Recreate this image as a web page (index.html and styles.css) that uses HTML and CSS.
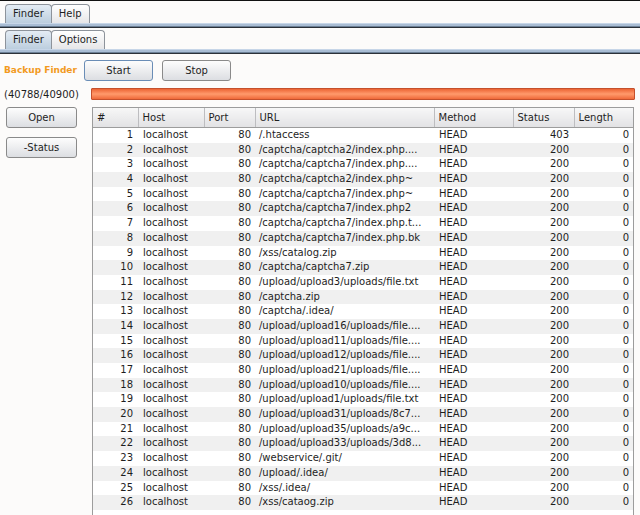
FILE: index.html
```html
<!DOCTYPE html>
<html lang="en">
<head>
    <meta charset="UTF-8">
    <title>Backup Finder</title>
    <link rel="stylesheet" href="styles.css">
</head>
<body>
    <div class="window">
        <div class="tabbar top">
            <div class="tab active">Finder</div>
            <div class="tab">Help</div>
        </div>
        <div class="tabline"></div>
        <div class="tabbar sub">
            <div class="tab active">Finder</div>
            <div class="tab">Options</div>
        </div>
        <div class="tabline"></div>

        <div class="toolbar">
            <span class="title">Backup Finder</span>
            <button class="btn focused">Start</button>
            <button class="btn">Stop</button>
        </div>
        <div class="progress-row">
            <span class="count">(40788/40900)</span>
            <div class="progress"></div>
        </div>

        <div class="main">
            <div class="side">
                <button class="btn side-btn">Open</button>
                <button class="btn side-btn">-Status</button>
            </div>
            <div class="tablebox">
                <table>
                    <colgroup>
                        <col class="c-num"><col class="c-host"><col class="c-port"><col class="c-url">
                        <col class="c-method"><col class="c-status"><col class="c-len">
                    </colgroup>
                    <thead>
                        <tr><th>#</th><th>Host</th><th>Port</th><th>URL</th><th>Method</th><th>Status</th><th>Length</th></tr>
                    </thead>
                    <tbody>
                        <tr><td class="r">1</td><td>localhost</td><td class="r">80</td><td>/.htaccess</td><td>HEAD</td><td class="r">403</td><td class="r">0</td></tr>
                        <tr><td class="r">2</td><td>localhost</td><td class="r">80</td><td>/captcha/captcha2/index.php....</td><td>HEAD</td><td class="r">200</td><td class="r">0</td></tr>
                        <tr><td class="r">3</td><td>localhost</td><td class="r">80</td><td>/captcha/captcha7/index.php....</td><td>HEAD</td><td class="r">200</td><td class="r">0</td></tr>
                        <tr><td class="r">4</td><td>localhost</td><td class="r">80</td><td>/captcha/captcha2/index.php~</td><td>HEAD</td><td class="r">200</td><td class="r">0</td></tr>
                        <tr><td class="r">5</td><td>localhost</td><td class="r">80</td><td>/captcha/captcha7/index.php~</td><td>HEAD</td><td class="r">200</td><td class="r">0</td></tr>
                        <tr><td class="r">6</td><td>localhost</td><td class="r">80</td><td>/captcha/captcha7/index.php2</td><td>HEAD</td><td class="r">200</td><td class="r">0</td></tr>
                        <tr><td class="r">7</td><td>localhost</td><td class="r">80</td><td>/captcha/captcha7/index.php.t...</td><td>HEAD</td><td class="r">200</td><td class="r">0</td></tr>
                        <tr><td class="r">8</td><td>localhost</td><td class="r">80</td><td>/captcha/captcha7/index.php.bk</td><td>HEAD</td><td class="r">200</td><td class="r">0</td></tr>
                        <tr><td class="r">9</td><td>localhost</td><td class="r">80</td><td>/xss/catalog.zip</td><td>HEAD</td><td class="r">200</td><td class="r">0</td></tr>
                        <tr><td class="r">10</td><td>localhost</td><td class="r">80</td><td>/captcha/captcha7.zip</td><td>HEAD</td><td class="r">200</td><td class="r">0</td></tr>
                        <tr><td class="r">11</td><td>localhost</td><td class="r">80</td><td>/upload/upload3/uploads/file.txt</td><td>HEAD</td><td class="r">200</td><td class="r">0</td></tr>
                        <tr><td class="r">12</td><td>localhost</td><td class="r">80</td><td>/captcha.zip</td><td>HEAD</td><td class="r">200</td><td class="r">0</td></tr>
                        <tr><td class="r">13</td><td>localhost</td><td class="r">80</td><td>/captcha/.idea/</td><td>HEAD</td><td class="r">200</td><td class="r">0</td></tr>
                        <tr><td class="r">14</td><td>localhost</td><td class="r">80</td><td>/upload/upload16/uploads/file....</td><td>HEAD</td><td class="r">200</td><td class="r">0</td></tr>
                        <tr><td class="r">15</td><td>localhost</td><td class="r">80</td><td>/upload/upload11/uploads/file....</td><td>HEAD</td><td class="r">200</td><td class="r">0</td></tr>
                        <tr><td class="r">16</td><td>localhost</td><td class="r">80</td><td>/upload/upload12/uploads/file....</td><td>HEAD</td><td class="r">200</td><td class="r">0</td></tr>
                        <tr><td class="r">17</td><td>localhost</td><td class="r">80</td><td>/upload/upload21/uploads/file....</td><td>HEAD</td><td class="r">200</td><td class="r">0</td></tr>
                        <tr><td class="r">18</td><td>localhost</td><td class="r">80</td><td>/upload/upload10/uploads/file....</td><td>HEAD</td><td class="r">200</td><td class="r">0</td></tr>
                        <tr><td class="r">19</td><td>localhost</td><td class="r">80</td><td>/upload/upload1/uploads/file.txt</td><td>HEAD</td><td class="r">200</td><td class="r">0</td></tr>
                        <tr><td class="r">20</td><td>localhost</td><td class="r">80</td><td>/upload/upload31/uploads/8c7...</td><td>HEAD</td><td class="r">200</td><td class="r">0</td></tr>
                        <tr><td class="r">21</td><td>localhost</td><td class="r">80</td><td>/upload/upload35/uploads/a9c...</td><td>HEAD</td><td class="r">200</td><td class="r">0</td></tr>
                        <tr><td class="r">22</td><td>localhost</td><td class="r">80</td><td>/upload/upload33/uploads/3d8...</td><td>HEAD</td><td class="r">200</td><td class="r">0</td></tr>
                        <tr><td class="r">23</td><td>localhost</td><td class="r">80</td><td>/webservice/.git/</td><td>HEAD</td><td class="r">200</td><td class="r">0</td></tr>
                        <tr><td class="r">24</td><td>localhost</td><td class="r">80</td><td>/upload/.idea/</td><td>HEAD</td><td class="r">200</td><td class="r">0</td></tr>
                        <tr><td class="r">25</td><td>localhost</td><td class="r">80</td><td>/xss/.idea/</td><td>HEAD</td><td class="r">200</td><td class="r">0</td></tr>
                        <tr><td class="r">26</td><td>localhost</td><td class="r">80</td><td>/xss/cataog.zip</td><td>HEAD</td><td class="r">200</td><td class="r">0</td></tr>
                    </tbody>
                </table>
            </div>
        </div>
    </div>
</body>
</html>
```

FILE: styles.css
```css
html, body {
    height: 100%;
}
body {
    margin: 0;
    font-family: "DejaVu Sans", sans-serif;
    font-size: 10px;
    color: #1e1e1e;
    background-color: #fcfbfa;
    overflow: hidden;
}
.window {
    display: flex;
    flex-direction: column;
    height: 100%;
    border-top: 1px solid #111;
}
.tabbar {
    display: flex;
    align-items: flex-end;
    padding-left: 5px;
}
.tabbar.top {
    padding-top: 3px;
}
.tabbar.sub {
    padding-top: 2px;
}
.tab {
    height: 18px;
    line-height: 18px;
    padding: 0 7px;
    border: 1px solid #8d939b;
    border-bottom: none;
    border-radius: 4px 4px 0 0;
    background: linear-gradient(#ffffff, #e6e6e8);
}
.tab + .tab {
    margin-left: -1px;
}
.tab.active {
    background: linear-gradient(#e4ecf4, #bccede);
    position: relative;
    z-index: 1;
}
.tabline {
    height: 5px;
    background: linear-gradient(#c7d6e8 0 1px, #a9bdd4 1px 3px, #6b7f95 3px 4px, #2b3138 4px 5px);
}
.toolbar {
    display: flex;
    align-items: center;
    height: 22px;
    margin-top: 5px;
    padding-left: 4px;
}
.title {
    width: 80px;
    color: #f29a1e;
    font-weight: bold;
    font-size: 9px;
}
.btn {
    font-family: "DejaVu Sans", sans-serif;
    font-size: 10px;
    color: #1e1e1e;
    height: 21px;
    padding: 0;
    border: 1px solid #8a8a8a;
    border-radius: 3px;
    background: linear-gradient(#fdfdfd, #dcdee2);
}
.toolbar .btn {
    width: 69px;
}
.toolbar .btn + .btn {
    margin-left: 9px;
}
.btn.focused {
    border-color: #6a8db6;
}
.progress-row {
    display: flex;
    align-items: center;
    height: 14px;
    margin-top: 6px;
    padding-left: 4px;
}
.count {
    width: 87px;
}
.progress {
    width: 542px;
    height: 10px;
    border: 1px solid #c4502c;
    border-radius: 1px;
    background: linear-gradient(#ec6434, #ff9a6c 50%, #ef6a3a);
}
.main {
    display: flex;
    flex: 1;
    margin-top: 6px;
    min-height: 0;
}
.side {
    width: 92px;
    display: flex;
    flex-direction: column;
    align-items: flex-start;
    gap: 9px;
    padding-left: 6px;
    box-sizing: border-box;
}
.side-btn {
    width: 71px;
}
.tablebox {
    width: 542px;
    border: 1px solid #9c9c9c;
    border-bottom: none;
    background-color: #ffffff;
    box-sizing: border-box;
    overflow: hidden;
}
table {
    border-collapse: collapse;
    table-layout: fixed;
    width: 540px;
}
.c-num { width: 45px; }
.c-host { width: 66px; }
.c-port { width: 51px; }
.c-url { width: 179px; }
.c-method { width: 79px; }
.c-status { width: 61px; }
.c-len { width: 59px; }
th {
    height: 19px;
    padding: 0 4px;
    font-weight: normal;
    text-align: left;
    background: linear-gradient(#f7f7f7, #e2e2e4);
    border-right: 1px solid #bdbdc0;
    border-bottom: 1px solid #9c9c9c;
}
th:last-child {
    border-right: none;
}
td {
    height: 14.68px;
    line-height: 14.68px;
    padding: 0 5px;
    white-space: nowrap;
    overflow: hidden;
}
td.r {
    text-align: right;
}
td:nth-child(3), td:nth-child(7) {
    padding-right: 4px;
}
td:nth-child(4) {
    padding-left: 4px;
}
tbody tr:nth-child(even) {
    background-color: #f0f0f0;
}
```
